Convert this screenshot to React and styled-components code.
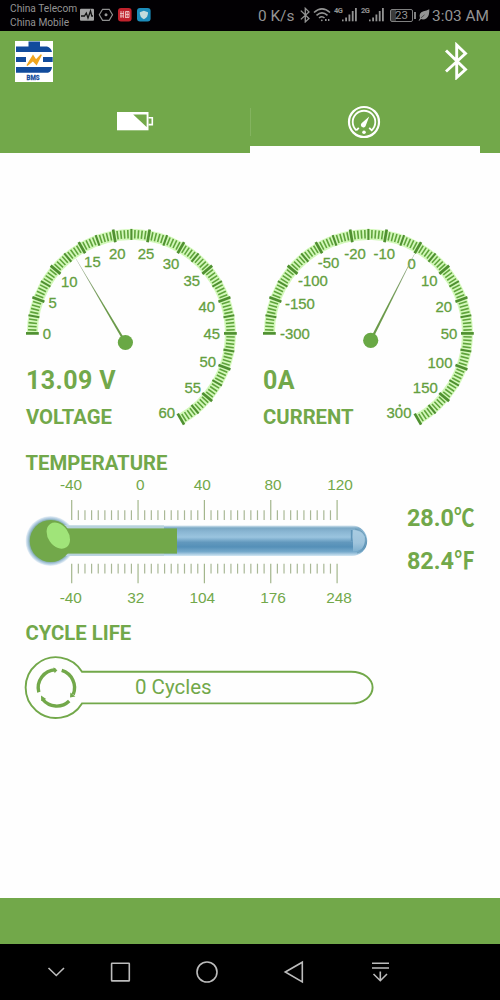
import React from "react";
import styled, { createGlobalStyle } from "styled-components";

const GREEN = "#72a84a";

const VOLTAGE_LABELS = [
  ["0", 27, 113.7],
  ["5", 32.7, 83],
  ["10", 49.3, 61.3],
  ["15", 72.4, 42],
  ["20", 97.3, 34],
  ["25", 126, 33.7],
  ["30", 151, 43.7],
  ["35", 171.7, 60.9],
  ["40", 186.7, 86.7],
  ["45", 191.7, 113.7],
  ["50", 187.7, 142],
  ["55", 172.7, 167.3],
  ["60", 146.7, 192.3],
];

const CURRENT_LABELS = [
  ["-300", 38, 113.7],
  ["-150", 43, 83.3],
  ["-100", 56, 60.3],
  ["-50", 71.6, 42.7],
  ["-20", 98, 34],
  ["-10", 127.3, 34],
  ["0", 154.7, 43.3],
  ["10", 172.3, 61],
  ["20", 186.7, 87],
  ["50", 192, 113.7],
  ["100", 183, 142.3],
  ["150", 168.3, 167.3],
  ["300", 142, 192.3],
];

const CX = 111.4;
const CY = 113.4;

function point(angle, r) {
  const rad = (angle * Math.PI) / 180;
  return [CX - Math.cos(rad) * r, CY - Math.sin(rad) * r];
}

function ticks() {
  const list = [];
  for (let i = 0; i <= 120; i++) {
    const major = i % 10 === 0;
    const mid = i % 5 === 0;
    const [x1, y1] = point(i * 2, major ? 92.6 : mid ? 93.5 : 95);
    const [x2, y2] = point(i * 2, major ? 105.4 : mid ? 104.5 : 103.4);
    list.push({ x1, y1, x2, y2, w: major ? 2.7 : mid ? 2.1 : 1.6, dark: mid });
  }
  return list;
}

function Gauge({ id, labels, hub, tip, value, name, extra }) {
  const [hx, hy] = hub;
  const [tx, ty] = tip;
  const len = Math.hypot(tx - hx, ty - hy);
  const nx = (-(ty - hy) / len) * 1.2;
  const ny = ((tx - hx) / len) * 1.2;
  const [ax, ay] = point(0, 99);
  const [bx, by] = point(240, 99);
  return (
    <GaugeBox>
      <svg width="230" height="220" viewBox="0 0 230 220">
        <defs>
          <linearGradient id={id} gradientUnits="userSpaceOnUse" x1={hx} y1={hy} x2={tx} y2={ty}>
            <stop offset="0.4" stopColor="#6b9a4a" />
            <stop offset="1" stopColor="#9aa892" />
          </linearGradient>
        </defs>
        <path
          d={`M${ax} ${ay}A99 99 0 1 1 ${bx} ${by}`}
          fill="none"
          stroke="#d3f8ba"
          strokeWidth="11"
        />
        {ticks().map((t, i) => (
          <line
            key={i}
            x1={t.x1}
            y1={t.y1}
            x2={t.x2}
            y2={t.y2}
            stroke={t.dark ? "#4f9030" : "#5fa43b"}
            strokeWidth={t.w}
          />
        ))}
        {labels.map(([text, x, y]) => (
          <GaugeLabel key={text} x={x} y={y + 5.2}>
            {text}
          </GaugeLabel>
        ))}
        <polygon
          points={`${hx + nx},${hy + ny} ${hx - nx},${hy - ny} ${tx - nx * 0.15},${ty - ny * 0.15} ${tx + nx * 0.15},${ty + ny * 0.15}`}
          fill={`url(#${id})`}
        />
        <circle cx={hx} cy={hy} r="7.6" fill="#69a845" />
        {extra}
      </svg>
      <Readout>
        <Value>{value}</Value>
        <Heading>{name}</Heading>
      </Readout>
    </GaugeBox>
  );
}

function Thermometer() {
  const marks = Array.from({ length: 41 }, (_, i) => i);
  const xs = [71, 140.2, 202.3, 273, 340];
  const xs2 = [70.8, 135.8, 202.3, 273, 339];
  return (
    <svg width="380" height="136" viewBox="0 476 380 136">
      <defs>
        <linearGradient id="tube" x1="0" y1="0" x2="0" y2="1">
          <stop offset="0" stopColor="#d3e4ee" />
          <stop offset="0.08" stopColor="#7ba9c6" />
          <stop offset="0.2" stopColor="#8ab6d3" />
          <stop offset="0.38" stopColor="#9ac4df" />
          <stop offset="0.55" stopColor="#6298bd" />
          <stop offset="0.7" stopColor="#5590b8" />
          <stop offset="0.86" stopColor="#76a9cb" />
          <stop offset="1" stopColor="#d3e7f4" />
        </linearGradient>
        <radialGradient id="bulb">
          <stop offset="0.8" stopColor="#6f9f8e" />
          <stop offset="0.9" stopColor="#a9c6dc" />
          <stop offset="1" stopColor="#eef5fa" />
        </radialGradient>
        <linearGradient id="shade" x1="0" y1="0" x2="0" y2="1">
          <stop offset="0" stopColor="#a9cce2" />
          <stop offset="0.6" stopColor="#9fc4dc" />
          <stop offset="1" stopColor="#7fb0cf" />
        </linearGradient>
      </defs>
      {["-40", "0", "40", "80", "120"].map((t, i) => (
        <ScaleLabel key={t} x={xs[i]} y="490.2">
          {t}
        </ScaleLabel>
      ))}
      {marks.map((i) => {
        const x = 71.7 + i * 6.635;
        const major = i % 10 === 0;
        return (
          <g key={i} stroke={major ? "#a3b68c" : "#a9b896"} strokeWidth="1.2">
            <line x1={x} x2={x} y1={major ? 500 : 510.3} y2="520" />
            <line x1={x} x2={x} y1="563.7" y2={major ? 583.3 : 573.6} />
          </g>
        );
      })}
      <circle cx="50.5" cy="541" r="25" fill="url(#bulb)" />
      <path d="M60 525.6H352A15 15 0 0 1 352 556H60Z" fill="url(#tube)" />
      <path d="M353 530Q364.5 530.5 364.8 541Q364.5 551 353 551.5Z" fill="url(#shade)" />
      <path d="M351.6 530V541" fill="none" stroke="#5f95b8" strokeWidth="1.5" />
      <path d="M355 529Q366 530.5 366 541Q366 550 357 553" fill="none" stroke="#6c9cb8" strokeWidth="1" />
      <rect x="60" y="525.4" width="104" height="30.4" fill="#b8d2dc" />
      <circle cx="50.8" cy="541" r="21" fill={GREEN} />
      <rect x="62" y="528.4" width="115" height="25.2" fill={GREEN} />
      <ellipse cx="58.3" cy="535.6" rx="10.3" ry="14.2" transform="rotate(-35 58.3 535.6)" fill="#a0e479" />
      {["-40", "32", "104", "176", "248"].map((t, i) => (
        <ScaleLabel key={t} x={xs2[i]} y="603.2">
          {t}
        </ScaleLabel>
      ))}
    </svg>
  );
}

function CycleBar() {
  return (
    <CycleBox>
      <svg width="380" height="66" viewBox="0 655 380 66" fill="none" stroke={GREEN}>
        <path
          d="M82 671.8A30.4 30.4 0 1 0 82 703.4H351C364 703.4 372.6 696 372.6 687.6S364 671.8 351 671.8Z"
          strokeWidth="1.9"
        />
        <g strokeWidth="3.4">
          <path d="M38.8 692.3A18 18 0 0 1 55.5 669.8" />
          <path d="M61.7 670.4A18 18 0 0 1 73.2 694.5" />
          <path d="M69.2 701A18 18 0 0 1 42.6 699.3" />
        </g>
        <g fill={GREEN} stroke="none">
          <path d="M53.5 667.3L57.4 670.2L54.6 673.2Z" />
          <path d="M70.4 692.5L75.4 696.5L70 697.6Z" />
          <path d="M41 695.6L46.2 699L41.2 701Z" />
        </g>
      </svg>
      <CycleText>0 Cycles</CycleText>
    </CycleBox>
  );
}

function BluetoothIcon({ width, height, stroke }) {
  return (
    <svg width={width} height={height} viewBox="0 0 24 38" fill="none" stroke="currentColor" strokeWidth={stroke}>
      <path d="M2 8.5L21.5 27.5L12.7 35.5V3L21.5 11.5L2 29.5" />
    </svg>
  );
}

function SignalBars() {
  return (
    <svg width="16" height="16" viewBox="0 0 16 16" fill="currentColor">
      <rect x="0" y="12.5" width="1.6" height="1.8" />
      <rect x="3.2" y="10.5" width="1.8" height="3.8" />
      <rect x="6.5" y="7.5" width="1.8" height="6.8" />
      <rect x="9.8" y="4" width="1.8" height="10.3" />
      <rect x="13" y="1" width="1.8" height="13.3" />
    </svg>
  );
}

function Status() {
  return (
    <StatusBar>
      <Carrier>
        <span>China Telecom</span>
        <span>China Mobile</span>
      </Carrier>
      <svg width="72" height="16" viewBox="80 8 72 16">
        <rect x="80" y="9.8" width="14" height="12" rx="1" fill="#a2a2a2" />
        <path d="M81 17H84.5L86.3 14L88 19L90.5 12L91.8 17H93" fill="none" stroke="#111" strokeWidth="1.3" />
        <path d="M102.6 10.3H109.2L112.5 15.8L109.2 21.3H102.6L99.3 15.8Z" fill="none" stroke="#8f8f8f" strokeWidth="1.2" />
        <circle cx="106" cy="15.8" r="1.5" fill="#999" />
        <rect x="118" y="9" width="13.6" height="13.4" rx="3" fill="#c0222c" />
        <path d="M120 14.5H124M121 12V19M123.3 12V19M120 17H124M125.5 12.5V19M125.5 12.5H129V18.5H126M127.2 12.5V18.5M126 15.5H129" fill="none" stroke="#eec4c4" strokeWidth="0.9" />
        <rect x="137" y="9" width="13.6" height="13.4" rx="3" fill="#1c8cba" />
        <path d="M143.9 11.8L148 13.2Q148.4 18 143.9 20.2Q139.4 18 139.8 13.2Z" fill="#c4dcdc" />
      </svg>
      <Speed>0 K/s</Speed>
      <BluetoothIcon width="10" height="16" stroke="3.2" />
      <WifiIcon width="18" height="16" viewBox="0 0 18 16" fill="none" stroke="currentColor" strokeWidth="1.6">
        <path d="M1 5.5Q9 -1.8 17 5.5M3.5 8.3Q9 3.5 14.5 8.3M6 11Q9 8.5 11.5 11" />
        <circle cx="8.8" cy="13.3" r="0.9" fill="currentColor" stroke="none" />
        <path d="M12 13H13.6M15 13H16.4" strokeWidth="2.2" />
      </WifiIcon>
      <Network>4G</Network>
      <SignalBars />
      <Network>2G</Network>
      <SignalBars />
      <Battery>23</Battery>
      <Leaf width="12" height="12" viewBox="0 0 12 12">
        <path d="M0.5 11.5L2 9.3Q0.3 4 5.5 2.3Q8.5 1.6 11.3 0.3Q11.6 7 8.6 9.2Q6 11 3 10.1L1.3 11.8Z" fill="currentColor" />
        <path d="M3 8.9L6.5 5.8" stroke="#222" strokeWidth="0.6" />
      </Leaf>
      <Clock>3:03 AM</Clock>
    </StatusBar>
  );
}

function Logo() {
  return (
    <svg width="38" height="41" viewBox="0 0 38 41">
      <rect width="38" height="41" fill="#fff" />
      <g fill="#114b9c">
        <path d="M13.5 0.5H25V5.5H32Q36 6.5 37 11H1V5.5H13.5Z" />
        <rect x="1" y="16" width="10" height="5" />
        <rect x="28" y="16" width="9.7" height="5" />
        <path d="M1 26H37Q36.5 30.5 33 31.7H1Z" />
      </g>
      <path d="M12 24.5L18 14.8L21 19.3L26.3 13.8L21.5 23.3L18 19.5Z" fill="#f0a51e" stroke="#f0a51e" strokeWidth="1.4" />
      <LogoText x="18" y="39" textLength="13" lengthAdjust="spacingAndGlyphs">
        BMS
      </LogoText>
    </svg>
  );
}

export default function App() {
  return (
    <Screen>
      <GlobalStyle />
      <Status />
      <Header>
        <TitleRow>
          <Logo />
          <BluetoothIcon width="24" height="38" stroke="2.9" />
        </TitleRow>
        <Tabs>
          <Tab>
            <svg width="38" height="20" viewBox="0 0 38 20">
              <path d="M1 1H32.5V19.3H1Z" fill="#fff" />
              <path d="M17.2 3.4H30.6V16Z" fill={GREEN} />
              <path d="M32.5 6.8H36.3V13.6H32.5" fill="none" stroke="#fff" strokeWidth="1.6" />
            </svg>
          </Tab>
          <Tab $active>
            <svg width="34" height="34" viewBox="0 0 34 34" fill="none" stroke="#fff">
              <circle cx="17" cy="17" r="15" strokeWidth="2.2" />
              <path d="M9.3 25.3A11.3 11.3 0 1 1 24.7 25.3L22.2 22.8M9.3 25.3L11.8 22.8" strokeWidth="1.8" />
              <path d="M14.8 18L22.2 11.6L18.8 20.4A2.5 2.5 0 1 1 14.8 18Z" fill="#fff" stroke="none" />
              <circle cx="17" cy="27.2" r="1.8" fill="#fff" stroke="none" />
            </svg>
          </Tab>
        </Tabs>
      </Header>
      <Content>
        <Gauges>
          <Gauge
            id="voltage-needle"
            labels={VOLTAGE_LABELS}
            hub={[105.4, 122.5]}
            tip={[55.8, 38.5]}
            value="13.09 V"
            name="VOLTAGE"
          />
          <Gauge
            id="current-needle"
            labels={CURRENT_LABELS}
            hub={[113.7, 120.4]}
            tip={[157.5, 34]}
            value="0A"
            name="CURRENT"
            extra={<circle cx="142.8" cy="185.5" r="1.3" fill={GREEN} />}
          />
        </Gauges>
        <SectionTitle>TEMPERATURE</SectionTitle>
        <TemperatureRow>
          <Thermometer />
          <Readings>
            <Reading>
              28.0<Unit>℃</Unit>
            </Reading>
            <Reading>
              82.4<Unit>℉</Unit>
            </Reading>
          </Readings>
        </TemperatureRow>
        <SectionTitle>CYCLE LIFE</SectionTitle>
        <CycleBar />
      </Content>
      <Footer />
      <NavBar>
        <NavIcon viewBox="0 0 24 24">
          <path d="M4.5 8L12.3 15.5L20 8" />
        </NavIcon>
        <NavIcon viewBox="0 0 24 24">
          <rect x="3.6" y="3.2" width="17.7" height="17.7" rx="0.5" />
        </NavIcon>
        <NavIcon viewBox="0 0 24 24">
          <circle cx="12" cy="12" r="10" />
        </NavIcon>
        <NavIcon viewBox="0 0 24 24">
          <path d="M3.3 12L20.3 2.2V21.9Z" />
        </NavIcon>
        <NavIcon viewBox="0 0 24 24">
          <path d="M4 3.2H21M4 8H21M12.3 11.5V20.5M5.5 14L12.3 20.7L19 14" />
        </NavIcon>
      </NavBar>
    </Screen>
  );
}

const GlobalStyle = createGlobalStyle`
  body {
    margin: 0;
    background: #fff;
  }
  svg {
    display: block;
    flex-shrink: 0;
  }
`;

const Screen = styled.div`
  width: 500px;
  height: 1000px;
  display: flex;
  flex-direction: column;
  overflow: hidden;
  background: #fefefe;
  color: ${GREEN};
  font-family: Roboto, "Noto Sans CJK SC", sans-serif;
`;

const StatusBar = styled.div`
  height: 30.5px;
  box-sizing: border-box;
  padding-left: 10px;
  display: flex;
  align-items: center;
  background: #020003;
  color: #939393;
  white-space: nowrap;
`;

const Carrier = styled.div`
  width: 70px;
  padding-top: 2px;
  display: flex;
  flex-direction: column;
  font-size: 10.2px;
  line-height: 14px;
`;

const Speed = styled.div`
  width: 42px;
  margin-left: 106px;
  padding-top: 1px;
  font-size: 15.4px;
`;

const WifiIcon = styled.svg`
  margin-left: 3px;
`;

const Network = styled.span`
  width: 8px;
  margin-left: 3px;
  margin-top: -9px;
  font-size: 7.5px;
  font-weight: 700;
  line-height: 8px;
  letter-spacing: -0.5px;
`;

const Battery = styled.div`
  position: relative;
  width: 23px;
  height: 13px;
  box-sizing: border-box;
  margin-left: 5px;
  border: 1px solid #808080;
  border-radius: 2px;
  background: linear-gradient(90deg, #3b3b3b 25%, #020003 25%);
  font-size: 11.5px;
  line-height: 11px;
  text-align: center;

  &::after {
    content: "";
    position: absolute;
    right: -3.5px;
    top: 2px;
    width: 2px;
    height: 7px;
    background: #808080;
  }
`;

const Leaf = styled.svg`
  margin-left: 5px;
`;

const Clock = styled.div`
  margin-left: 2px;
  padding-top: 1px;
  font-size: 15.4px;
`;

const Header = styled.header`
  height: 122px;
  display: flex;
  flex-direction: column;
  background: ${GREEN};
  color: #fff;
`;

const TitleRow = styled.div`
  flex: 1;
  display: flex;
  align-items: center;
  justify-content: space-between;
  padding: 0 32px 11px 15px;
`;

const LogoText = styled.text`
  font: 700 7.5px Roboto, sans-serif;
  fill: #114b9c;
  stroke: #114b9c;
  stroke-width: 0.3;
  text-anchor: middle;
`;

const Tabs = styled.nav`
  height: 50px;
  display: grid;
  grid-template-columns: 230px 230px;
  margin-left: 20px;
`;

const Tab = styled.div`
  display: flex;
  align-items: flex-start;
  justify-content: center;
  box-sizing: border-box;
  padding-top: ${(props) => (props.$active ? "2px" : "8px")};
  padding-right: ${(props) => (props.$active ? "2px" : "0")};
  border-bottom: 7px solid ${(props) => (props.$active ? "#fefefe" : GREEN)};
  background: ${(props) =>
    props.$active
      ? "linear-gradient(#83b35f, #83b35f) 0 5px / 1px 28px no-repeat"
      : "none"};
`;

const Content = styled.main`
  height: 745.5px;
  box-sizing: border-box;
  padding-top: 67.5px;
`;

const Gauges = styled.section`
  display: grid;
  grid-template-columns: 237px 237px;
  padding-left: 20px;
`;

const GaugeBox = styled.div`
  position: relative;
  height: 220px;
`;

const GaugeLabel = styled.text`
  font: 14.9px "Liberation Sans", Arial, sans-serif;
  fill: #649f3f;
  stroke: #649f3f;
  stroke-width: 0.3;
  text-anchor: middle;
`;

const ScaleLabel = styled.text`
  font: 15.4px "Liberation Sans", Arial, sans-serif;
  fill: ${GREEN};
  text-anchor: middle;
`;

const Readout = styled.div`
  position: absolute;
  left: 6px;
  top: 146px;
`;

const Value = styled.div`
  height: 38.5px;
  font-size: 25px;
  font-weight: 700;
  line-height: 30px;
  letter-spacing: 0.4px;
`;

const Heading = styled.div`
  font-size: 20.3px;
  font-weight: 700;
  line-height: 24px;
`;

const SectionTitle = styled(Heading)`
  height: 36px;
  box-sizing: border-box;
  padding: 11px 0 0 25.5px;
`;

const TemperatureRow = styled.section`
  display: flex;
  height: 134px;
`;

const Readings = styled.div`
  width: 95px;
  padding-top: 27px;
`;

const Reading = styled.div`
  height: 43px;
  display: flex;
  justify-content: flex-end;
  font-size: 23.4px;
  font-weight: 700;
  line-height: 30px;
  white-space: nowrap;
`;

const Unit = styled.span`
  width: 21px;
  transform: scaleX(0.88);
  transform-origin: left;
`;

const CycleBox = styled.section`
  position: relative;
  padding-top: 9px;
`;

const CycleText = styled.div`
  position: absolute;
  left: 135px;
  top: 29px;
  font-size: 20.5px;
  line-height: 24px;
`;

const Footer = styled.footer`
  height: 45.5px;
  background: ${GREEN};
`;

const NavBar = styled.nav`
  flex: 1;
  display: grid;
  grid-template-columns: 64px 87px 86.5px 86.5px 24px;
  align-items: center;
  padding-left: 44px;
  background: #000;
`;

const NavIcon = styled.svg`
  width: 24px;
  height: 24px;
  fill: none;
  stroke: #bcbcbc;
  stroke-width: 1.6;
`;
